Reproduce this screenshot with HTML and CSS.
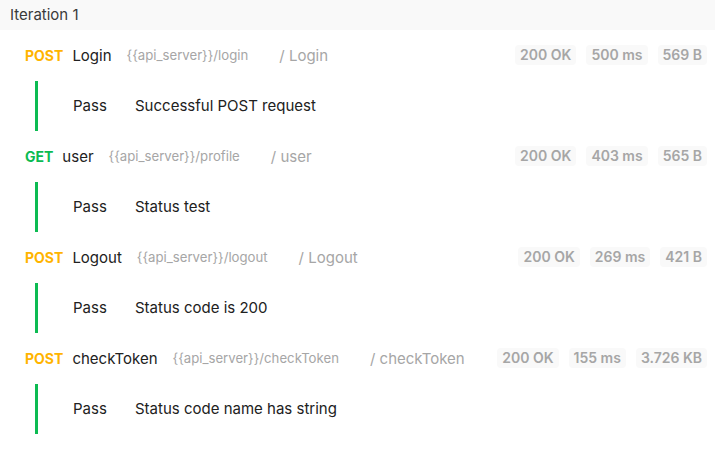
FILE: index.html
```html
<!DOCTYPE html>
<html>
<head>
<meta charset="utf-8">
<link rel="stylesheet" href="styles.css">
</head>
<body>
<div class="iteration">
  <div class="iter-head">Iteration 1</div>

  <div class="req">
    <span class="method post">POST</span>
    <span class="name">Login</span>
    <span class="url">{{api_server}}/login</span>
    <span class="path">/ Login</span>
    <div class="badges">
      <span class="badge">200 OK</span>
      <span class="badge">500 ms</span>
      <span class="badge">569 B</span>
    </div>
  </div>
  <div class="test">
    <div class="bar"></div>
    <span class="result">Pass</span>
    <span class="msg">Successful POST request</span>
  </div>

  <div class="req">
    <span class="method get">GET</span>
    <span class="name">user</span>
    <span class="url">{{api_server}}/profile</span>
    <span class="path">/ user</span>
    <div class="badges">
      <span class="badge">200 OK</span>
      <span class="badge">403 ms</span>
      <span class="badge">565 B</span>
    </div>
  </div>
  <div class="test">
    <div class="bar"></div>
    <span class="result">Pass</span>
    <span class="msg">Status test</span>
  </div>

  <div class="req">
    <span class="method post">POST</span>
    <span class="name">Logout</span>
    <span class="url">{{api_server}}/logout</span>
    <span class="path">/ Logout</span>
    <div class="badges">
      <span class="badge">200 OK</span>
      <span class="badge">269 ms</span>
      <span class="badge">421 B</span>
    </div>
  </div>
  <div class="test">
    <div class="bar"></div>
    <span class="result">Pass</span>
    <span class="msg">Status code is 200</span>
  </div>

  <div class="req">
    <span class="method post">POST</span>
    <span class="name">checkToken</span>
    <span class="url">{{api_server}}/checkToken</span>
    <span class="path">/ checkToken</span>
    <div class="badges">
      <span class="badge">200 OK</span>
      <span class="badge">155 ms</span>
      <span class="badge">3.726 KB</span>
    </div>
  </div>
  <div class="test">
    <div class="bar"></div>
    <span class="result">Pass</span>
    <span class="msg">Status code name has string</span>
  </div>
</div>
</body>
</html>
```

FILE: styles.css
```css
* { box-sizing: border-box; }
html, body {
  margin: 0;
  padding: 0;
  background: #ffffff;
  font-family: Inter, "Noto Sans", sans-serif;
  color: #212121;
}
.iter-head {
  height: 30px;
  background: #f9f9f9;
  padding-left: 10px;
  font-size: 15px;
  line-height: 30px;
  color: #3a3a3a;
}
.req {
  display: flex;
  align-items: center;
  height: 50.5px;
  padding-left: 25px;
  padding-right: 8px;
}
.method {
  font-size: 14px;
  font-weight: 700;
  margin-right: 9px;
}
.method.post { color: #ffb400; }
.method.get { color: #0cbb52; }
.name {
  font-size: 15px;
  color: #212121;
  margin-right: 15px;
}
.url {
  font-size: 13.2px;
  color: #a6a6a6;
  margin-right: 31px;
}
.path {
  font-size: 15px;
  color: #a6a6a6;
}
.badges {
  margin-left: auto;
  display: flex;
  gap: 10px;
}
.badge {
  background: #f9f9f9;
  color: #a6a6a6;
  font-size: 14px;
  font-weight: 600;
  line-height: 20px;
  padding: 0 5px;
  border-radius: 4px;
}
.test {
  display: flex;
  align-items: center;
  height: 50.5px;
  padding-left: 35px;
}
.bar {
  width: 3px;
  align-self: stretch;
  background: #0cbb52;
  margin-right: 35px;
}
.result {
  font-size: 15px;
  width: 62px;
  color: #212121;
}
.msg {
  font-size: 15px;
  color: #212121;
}
```
